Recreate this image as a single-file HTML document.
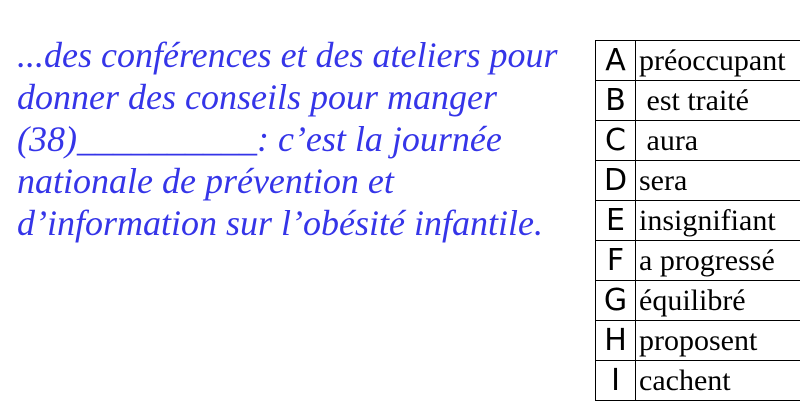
<!DOCTYPE html>
<html><head><style>
body{margin:0;width:800px;height:400px;background:#fff;position:relative;overflow:hidden}
.t{position:absolute;left:17px;top:34px;font:italic 36px/42px "Liberation Serif",serif;color:#3535e8;white-space:nowrap}
table{position:absolute;left:595px;top:40px;border-collapse:collapse;table-layout:fixed;width:260px}
td{border:1px solid #000;height:39px;padding:0;vertical-align:middle;overflow:visible}
td.l{text-align:center;font:30px/39px "DejaVu Sans","Liberation Sans",sans-serif}
td.w{border-right:none;padding-left:3px;font:30px/37px "Liberation Serif",serif;white-space:nowrap}
</style></head><body>
<div class="t">...des conférences et des ateliers pour<br>donner des conseils pour manger<br>(38)__________: c’est la journée<br>nationale de prévention et<br>d’information sur l’obésité infantile.</div>
<table>
<colgroup><col style="width:40px"><col style="width:220px"></colgroup>
<tr><td class="l">A</td><td class="w">préoccupant</td></tr>
<tr><td class="l">B</td><td class="w">&nbsp;est traité</td></tr>
<tr><td class="l">C</td><td class="w">&nbsp;aura</td></tr>
<tr><td class="l">D</td><td class="w">sera</td></tr>
<tr><td class="l">E</td><td class="w">insignifiant</td></tr>
<tr><td class="l">F</td><td class="w">a progressé</td></tr>
<tr><td class="l">G</td><td class="w">équilibré</td></tr>
<tr><td class="l">H</td><td class="w">proposent</td></tr>
<tr><td class="l">I</td><td class="w">cachent</td></tr>
</table>
</body></html>
